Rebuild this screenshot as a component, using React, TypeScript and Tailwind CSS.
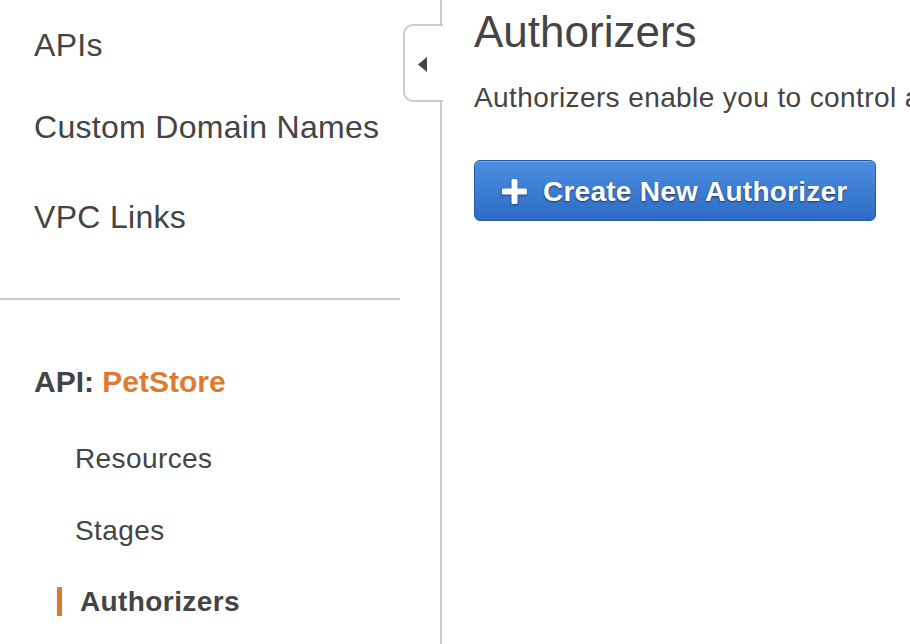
import React from 'react';

const font = { fontFamily: '"Liberation Sans", Arial, Helvetica, sans-serif' };

const PlusIcon: React.FC = () => (
  <svg width="25" height="25" viewBox="0 0 25 25" className="drop-shadow-[0_1px_1px_rgba(0,0,0,0.45)]">
    <rect x="9.5" y="0" width="6" height="25" rx="1.5" fill="#fff" />
    <rect x="0" y="9.5" width="25" height="6" rx="1.5" fill="#fff" />
  </svg>
);

const App: React.FC = () => {
  return (
    <div className="flex h-screen w-full overflow-hidden bg-white text-[#444]" style={font}>
      {/* sidebar */}
      <aside className="relative w-[442px] shrink-0 border-r-2 border-[#cccccc]">
        <div className="w-[400px]">
          <div className="mt-[29px] pl-[34px] text-[32px] leading-none tracking-[0.3px]">APIs</div>
          <div className="mt-[50px] pl-[34px] text-[32px] leading-none tracking-[0.3px]">Custom Domain Names</div>
          <div className="mt-[58px] pl-[34px] text-[32px] leading-none tracking-[0.3px]">VPC Links</div>
          <div className="mt-[65px] h-[2px] bg-[#cccccc]" />
          <div className="mt-[67px] pl-[34px] text-[30px] font-bold leading-none">
            API: <span className="text-[#dd7b32]">PetStore</span>
          </div>
          <div className="mt-[48px] pl-[75px] text-[28px] leading-none tracking-[0.4px]">Resources</div>
          <div className="mt-[44px] pl-[75px] text-[28px] leading-none tracking-[0.4px]">Stages</div>
          <div className="mt-[42px] flex items-center pl-[57px]">
            <span className="h-[29px] w-[5px] bg-[#d97a2c]" />
            <span className="ml-[18px] text-[28px] font-bold leading-none tracking-[0.4px]">Authorizers</span>
          </div>
        </div>
        {/* collapse tab */}
        <button className="absolute left-[403px] top-[24px] flex h-[78px] w-[40px] items-center rounded-l-[10px] border-2 border-r-0 border-[#cccccc] bg-white pl-[13px] pt-[3px]">
          <svg width="9" height="15" viewBox="0 0 9 15">
            <polygon points="9,0 9,15 0,7.5" fill="#444" />
          </svg>
        </button>
      </aside>

      {/* main */}
      <main className="flex-1 pl-[32px] pt-[10px]">
        <h1 className="whitespace-nowrap text-[44px] font-normal leading-none">Authorizers</h1>
        <p className="mt-[30px] whitespace-nowrap text-[28px] leading-none tracking-[0.4px]">
          Authorizers enable you to control access to your APIs
        </p>
        <button className="mt-[48px] flex h-[61px] w-[402px] items-center rounded-[6px] border border-[#2758a0] bg-gradient-to-b from-[#4b90e3] to-[#2e6bc3] pl-[27px] pt-[2px] text-white shadow-[inset_0_1px_0_rgba(255,255,255,0.25)]">
          <PlusIcon />
          <span className="ml-[16px] text-[28px] font-bold leading-none tracking-[0.25px] [text-shadow:0_1px_2px_rgba(0,0,0,0.55)]">
            Create New Authorizer
          </span>
        </button>
      </main>
    </div>
  );
};

export default App;
